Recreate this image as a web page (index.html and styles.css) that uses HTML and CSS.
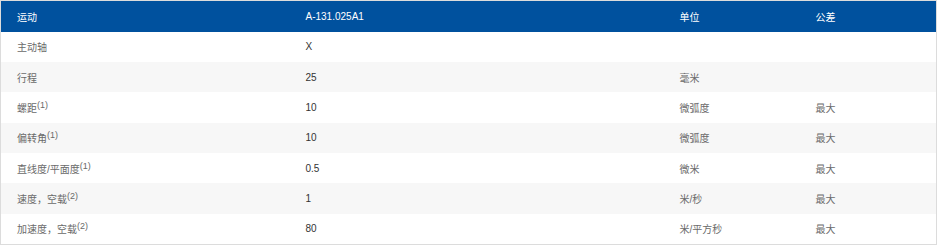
FILE: index.html
```html
<!DOCTYPE html>
<html lang="zh">
<head>
<meta charset="utf-8">
<link rel="stylesheet" href="styles.css">
</head>
<body>
<div class="wrap">
<table class="spec">
  <colgroup>
    <col class="c1"><col class="c2"><col class="c3"><col class="c4">
  </colgroup>
  <thead>
    <tr><th>运动</th><th>A-131.025A1</th><th>单位</th><th>公差</th></tr>
  </thead>
  <tbody>
    <tr><td>主动轴</td><td class="v">X</td><td></td><td></td></tr>
    <tr><td>行程</td><td class="v">25</td><td>毫米</td><td></td></tr>
    <tr><td>螺距<sup>(1)</sup></td><td class="v">10</td><td>微弧度</td><td>最大</td></tr>
    <tr><td>偏转角<sup>(1)</sup></td><td class="v">10</td><td>微弧度</td><td>最大</td></tr>
    <tr><td>直线度/平面度<sup>(1)</sup></td><td class="v">0.5</td><td>微米</td><td>最大</td></tr>
    <tr><td>速度，空载<sup>(2)</sup></td><td class="v">1</td><td>米/秒</td><td>最大</td></tr>
    <tr><td>加速度，空载<sup>(2)</sup></td><td class="v">80</td><td>米/平方秒</td><td>最大</td></tr>
  </tbody>
</table>
</div>
</body>
</html>
```

FILE: styles.css
```css
html, body {
  margin: 0;
  padding: 0;
  background: #fff;
}
.wrap {
  width: 937px;
}
.spec {
  width: 937px;
  border-collapse: collapse;
  border: 1px solid #dcdcdc;
  font-family: "Liberation Sans", "Noto Sans CJK SC", sans-serif;
  font-size: 10px;
  color: #6a6a6a;
  table-layout: fixed;
}
.c1 { width: 289px; }
.c2 { width: 374px; }
.c3 { width: 136px; }
.c4 { width: auto; }
.spec th {
  background: #00519e;
  color: #fff;
  font-weight: normal;
  text-align: left;
  height: 31px;
  padding: 0 0 0 16px;
  box-sizing: border-box;
}
.spec td {
  height: 30.4px;
  padding: 0 0 0 16px;
  box-sizing: border-box;
}
.spec tbody tr:nth-child(even) td {
  background: #f7f7f7;
}
.spec td.v {
  color: #333;
}
.spec sup {
  font-size: 9px;
  line-height: 0;
  vertical-align: 4px;
}
```
